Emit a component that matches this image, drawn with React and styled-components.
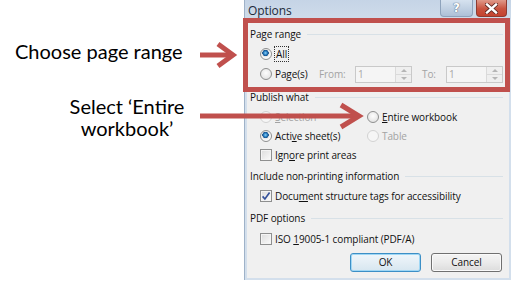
import styled, { createGlobalStyle } from "styled-components";

const GlobalStyle = createGlobalStyle`
  html, body { margin: 0; padding: 0; background: #fff; }
  body { width: 512px; height: 281px; overflow: hidden; }
`;

const RED = "#c0504d";

export default function App() {
  return (
    <>
      <GlobalStyle />
      <Page>
        <Notes>
          <Callout>Choose page range</Callout>
          <Callout $center>Select ‘Entire<br />workbook’</Callout>
        </Notes>

        <Dialog>
          <TitleBar>
            <Title>Options</Title>
            <HelpBtn>?</HelpBtn>
            <CloseBtn>
              <svg width="13" height="11" viewBox="0 0 13 11">
                <path d="M2 1.5 L11 9.5 M11 1.5 L2 9.5" stroke="#5a2620" strokeWidth="4" strokeLinecap="square" />
                <path d="M2 1.5 L11 9.5 M11 1.5 L2 9.5" stroke="#fff" strokeWidth="2.4" strokeLinecap="square" />
              </svg>
            </CloseBtn>
          </TitleBar>

          <Body>
            <GroupHead>Page range</GroupHead>
            <Row $h={20}>
              <Radio $checked />
              <Text><Focus>All</Focus></Text>
            </Row>
            <Row $h={20}>
              <Cell $w={59}>
                <Radio />
                <Text>Page(s)</Text>
              </Cell>
              <Cell $w={36}><Text $off>From:</Text></Cell>
              <Spin>
                <SpinField>1</SpinField>
                <SpinArrows>
                  <SpinBtn><Tri $up /></SpinBtn>
                  <SpinBtn><Tri /></SpinBtn>
                </SpinArrows>
              </Spin>
              <Cell $w={24} $ml={10}><Text $off>To:</Text></Cell>
              <Spin>
                <SpinField>1</SpinField>
                <SpinArrows>
                  <SpinBtn><Tri $up /></SpinBtn>
                  <SpinBtn><Tri /></SpinBtn>
                </SpinArrows>
              </Spin>
            </Row>

            <GroupHead $mt={3}>Publish what</GroupHead>
            <Row $h={19}>
              <Cell $w={107}>
                <Radio $off />
                <Text $off><u>S</u>election</Text>
              </Cell>
              <Cell>
                <Radio />
                <Text><u>E</u>ntire workbook</Text>
              </Cell>
            </Row>
            <Row $h={19}>
              <Cell $w={107}>
                <Radio $checked />
                <Text>Acti<u>v</u>e sheet(s)</Text>
              </Cell>
              <Cell>
                <Radio $off />
                <Text $off>Table</Text>
              </Cell>
            </Row>
            <Row $h={19}>
              <Check />
              <Text>Ign<u>o</u>re print areas</Text>
            </Row>

            <GroupHead $mt={2}>Include non-printing information</GroupHead>
            <Row $h={20}>
              <Check $checked>
                <svg width="10" height="10" viewBox="0 0 10 10">
                  <path d="M1.6 5.4 L3.9 8 L8.6 1.6" fill="none" stroke="#34519a" strokeWidth="1.7" />
                </svg>
              </Check>
              <Text>Docu<u>m</u>ent structure tags for accessibility</Text>
            </Row>

            <GroupHead $mt={2}>PDF options</GroupHead>
            <Row $h={21}>
              <Check />
              <Text>ISO <u>1</u>9005-1 compliant (PDF/A)</Text>
            </Row>

            <Buttons>
              <Button $default>OK</Button>
              <Button>Cancel</Button>
            </Buttons>
          </Body>
        </Dialog>

        <Highlight />
        <Arrows width="512" height="281" viewBox="0 0 512 281">
          <g stroke={RED} strokeWidth="5" fill="none">
            <path d="M200 55 H232" />
            <path d="M218 44 L233 55 L218 66" />
            <path d="M200 116 H358" />
            <path d="M341 105 L359 116 L341 127" />
          </g>
        </Arrows>
      </Page>
    </>
  );
}

const Page = styled.div`
  position: relative;
  width: 512px;
  height: 281px;
  display: flex;
  background: #fff;
`;

const Notes = styled.div`
  width: 244px;
  flex-shrink: 0;
  display: flex;
  flex-direction: column;
  padding: 40px 5px 0 15px;
  box-sizing: border-box;
`;

const Callout = styled.div`
  font-family: Lato, "Open Sans", sans-serif;
  font-size: 20px;
  line-height: 22px;
  color: #000;
  text-align: ${(p) => (p.$center ? "center" : "left")};
  margin-top: ${(p) => (p.$center ? "33px" : "0")};
`;

const Dialog = styled.div`
  width: 267px;
  height: 280px;
  display: flex;
  flex-direction: column;
  background: #d3dfec;
  border-left: 1px solid #9fb2c8;
  box-sizing: border-box;
  font-family: "Open Sans", "Noto Sans", sans-serif;
  font-size: 10px;
  letter-spacing: -0.1px;
  color: #111;
`;

const TitleBar = styled.div`
  height: 19px;
  display: flex;
  align-items: flex-start;
  padding: 0 4px 0 2px;
  background: linear-gradient(#c5d4e6, #cfdcea);
`;

const Title = styled.div`
  flex: 1;
  font-size: 12px;
  line-height: 22px;
  color: #1c2a3a;
  padding-left: 1px;
`;

const HelpBtn = styled.div`
  width: 33px;
  height: 17px;
  box-sizing: border-box;
  border: 1px solid #8ea3bc;
  border-top: none;
  border-radius: 0 0 4px 4px;
  background: linear-gradient(#d6e2ef, #aec1d8);
  color: #fff;
  font-family: "DejaVu Sans", sans-serif;
  font-weight: bold;
  font-size: 12px;
  line-height: 16px;
  text-align: center;
  text-shadow: 0 0 1px #4c5f78, 0 0 1px #4c5f78;
  margin-right: 3px;
`;

const CloseBtn = styled.div`
  width: 31px;
  height: 17px;
  box-sizing: border-box;
  border: 1px solid #8d3b31;
  border-top: none;
  border-radius: 0 0 4px 4px;
  background: linear-gradient(#e09a8a, #c9533f 55%, #c4432f);
  display: flex;
  align-items: center;
  justify-content: center;
`;

const Body = styled.div`
  flex: 1;
  margin: 0 2px 2px 2px;
  background: #f0f0f0;
  display: flex;
  flex-direction: column;
  padding: 5px 6px 0 0;
`;

const GroupHead = styled.div`
  height: 20px;
  margin-top: ${(p) => p.$mt || 0}px;
  display: flex;
  align-items: center;
  padding-left: 3px;
  white-space: nowrap;

  &::after {
    content: "";
    flex: 1;
    height: 1px;
    margin-left: 6px;
    background: #d8e1e7;
  }
`;

const Row = styled.div`
  height: ${(p) => p.$h}px;
  display: flex;
  align-items: center;
  padding-left: 13px;
`;

const Cell = styled.div`
  display: flex;
  align-items: center;
  width: ${(p) => (p.$w ? `${p.$w}px` : "auto")};
  margin-left: ${(p) => p.$ml || 0}px;
  flex-shrink: 0;
`;

const Text = styled.span`
  color: ${(p) => (p.$off ? "#a3a3a3" : "#111")};
  white-space: nowrap;
  line-height: 14px;

  u {
    text-decoration: underline;
    text-underline-offset: 1px;
  }
`;

const Focus = styled.span`
  outline: 1px dotted #333;
  outline-offset: 0;
  padding: 0 1px;
`;

const Radio = styled.span`
  width: 12px;
  height: 12px;
  box-sizing: border-box;
  border-radius: 50%;
  margin-right: 3px;
  flex-shrink: 0;
  border: 1px solid ${(p) => (p.$off ? "#d2d2d2" : "#8e8f8f")};
  background: ${(p) =>
    p.$checked
      ? "radial-gradient(circle at 45% 40%, #8fd3f7 0, #2a7fc2 1.8px, #174e86 3px, #e6e6e6 3.4px, #fafafa 5px)"
      : p.$off
      ? "#f6f6f6"
      : "radial-gradient(circle at 50% 40%, #fdfdfd, #dcdcdc)"};
`;

const Check = styled.span`
  width: 12px;
  height: 12px;
  box-sizing: border-box;
  margin-right: 3px;
  flex-shrink: 0;
  border: 1px solid #8e8f8f;
  background: linear-gradient(135deg, #dcdcdc, #fbfbfb);
  box-shadow: inset 0 0 0 1px #f4f4f4;
  display: flex;
  align-items: center;
  justify-content: center;
`;

const Spin = styled.div`
  width: 57px;
  height: 17px;
  display: flex;
  box-sizing: border-box;
  border: 1px solid #c9c9c9;
  background: #f5f5f5;
  flex-shrink: 0;
`;

const SpinField = styled.div`
  flex: 1;
  color: #a8a8a8;
  padding-left: 2px;
  line-height: 15px;
`;

const SpinArrows = styled.div`
  width: 15px;
  display: flex;
  flex-direction: column;
  border-left: 1px solid #dadada;
`;

const SpinBtn = styled.div`
  flex: 1;
  display: flex;
  align-items: center;
  justify-content: center;
  background: #efefef;
  & + & { border-top: 1px solid #dadada; }
`;

const Tri = styled.span`
  width: 0;
  height: 0;
  border-left: 3px solid transparent;
  border-right: 3px solid transparent;
  ${(p) => (p.$up ? "border-bottom: 3px solid #b5b5b5;" : "border-top: 3px solid #b5b5b5;")}
`;

const Buttons = styled.div`
  display: flex;
  justify-content: flex-end;
  gap: 10px;
  margin-top: 4px;
  padding-right: 1px;
`;

const Button = styled.div`
  width: 71px;
  height: 19px;
  box-sizing: border-box;
  border-radius: 3px;
  border: 1px solid ${(p) => (p.$default ? "#3c8fc6" : "#707070")};
  background: ${(p) =>
    p.$default
      ? "linear-gradient(#eef6fb, #e4eef5 50%, #d6e6f0)"
      : "linear-gradient(#f4f4f4, #ebebeb 50%, #dcdcdc)"};
  box-shadow: ${(p) => (p.$default ? "inset 0 0 0 1px #9fd7f5" : "inset 0 0 0 1px #fafafa")};
  text-align: center;
  line-height: 17px;
  color: #111;
`;

const Highlight = styled.div`
  position: absolute;
  left: 243px;
  top: 18px;
  width: 267px;
  height: 74px;
  box-sizing: border-box;
  border: 5px solid ${RED};
  pointer-events: none;
`;

const Arrows = styled.svg`
  position: absolute;
  left: 0;
  top: 0;
  pointer-events: none;
`;
